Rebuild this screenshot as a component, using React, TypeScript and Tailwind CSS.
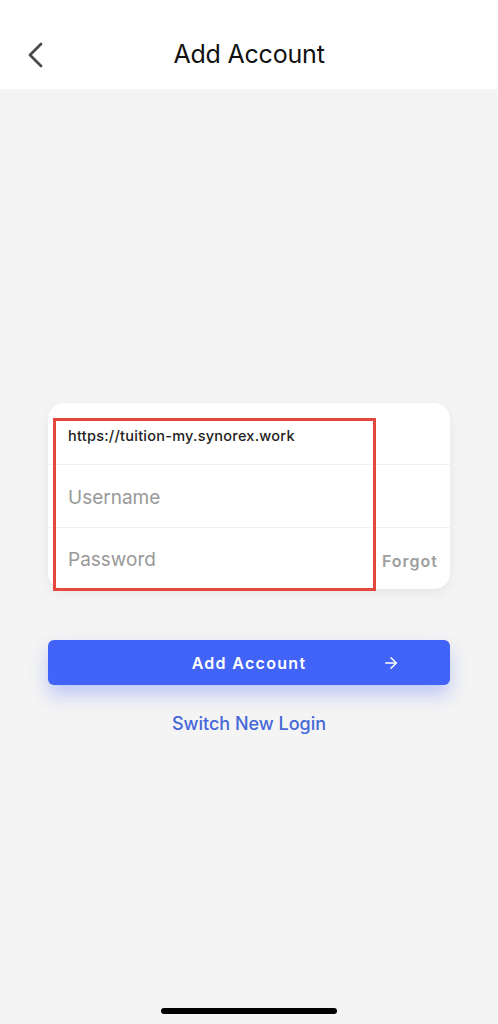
import { ArrowRight } from 'lucide-react';

export default function App() {
  return (
    <div className="flex min-h-[1024px] w-full flex-col bg-[#f4f4f4] font-['Inter',sans-serif]">
      {/* Header */}
      <div className="flex h-[89px] items-center bg-white px-[24px] pt-[20px]">
        <svg width="22" height="28" viewBox="0 0 22 28" className="shrink-0">
          <path d="M17 3 L6 14 L17 25" fill="none" stroke="#4a4a4a" strokeWidth="2.8" strokeLinecap="round" strokeLinejoin="round" />
        </svg>
        <h1 className="flex-1 pr-[22px] text-center text-[25px] font-normal tracking-[-0.2px] text-[#111]">
          Add Account
        </h1>
      </div>

      <div className="flex flex-col px-[48px] pt-[314px]">
        {/* Login card */}
        <div className="relative rounded-[16px] bg-white shadow-[0_4px_12px_rgba(0,0,0,0.06)]">
          <div className="flex h-[62px] items-center border-b border-[#f1f1f1] pl-[20px] pr-[12px] pt-[5px]">
            <span className="text-[14.5px] font-medium tracking-[0.25px] text-[#222]">https://tuition-my.synorex.work</span>
          </div>
          <div className="flex h-[63px] items-center border-b border-[#f1f1f1] pl-[20px] pr-[12px] pt-[4px]">
            <span className="text-[19px] text-[#999]">Username</span>
          </div>
          <div className="flex h-[61px] items-center pl-[20px] pr-[12px] pt-[4px]">
            <span className="flex-1 text-[19px] text-[#999]">Password</span>
            <span className="text-[16px] font-semibold tracking-[1px] text-[#9e9e9e]">Forgot</span>
          </div>
          {/* annotation box */}
          <div className="absolute left-[5px] top-[15px] h-[173px] w-[323px] border-[3px] border-[#e4473b]" />
        </div>

        {/* Submit */}
        <button className="relative mt-[51px] flex h-[45px] items-center justify-center rounded-[6px] bg-[#4263f7] shadow-[0_10px_18px_rgba(66,99,247,0.3)]">
          <span className="text-[16px] font-semibold tracking-[1.3px] text-white">Add Account</span>
          <ArrowRight className="absolute right-[50px] h-[18px] w-[18px] text-white" strokeWidth={2} />
        </button>

        <div className="mt-[25px] text-center text-[18px] font-medium text-[#4668d8]">Switch New Login</div>
      </div>

      <div className="mt-auto flex justify-center pb-[10px]">
        <div className="h-[6px] w-[176px] rounded-full bg-black" />
      </div>
    </div>
  );
}
